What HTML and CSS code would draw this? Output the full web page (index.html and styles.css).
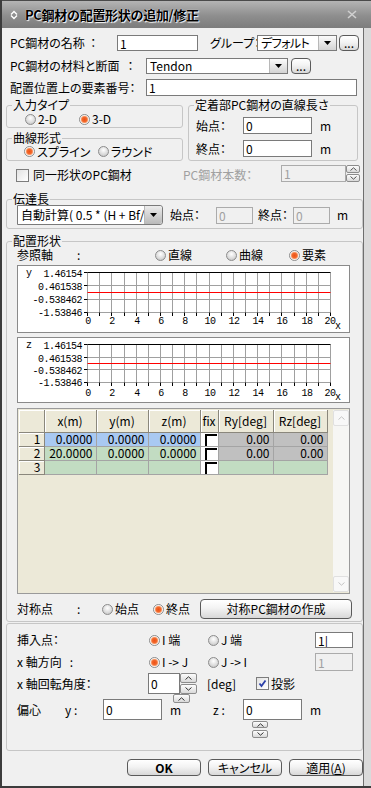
FILE: index.html
```html
<!doctype html>
<html lang="ja">

<head>
  <meta charset="utf-8">
  <title>PC鋼材の配置形状の追加/修正</title>
  <link rel="stylesheet" href="styles.css">
</head>

<body>
<div class="frame">
  <div class="titlebar">
    <svg class="title-icon" width="8" height="10" viewBox="0 0 8 10"><path d="M1 4.5L4 1.5L7 4.5M1 5.5L4 8.5L7 5.5" fill="none" stroke="#fff" stroke-width="1.4"/></svg>
    <span class="title-text">PC鋼材の配置形状の追加/修正</span>
    <svg class="title-close" width="10" height="9" viewBox="0 0 10 9"><path d="M1 1L9 8M9 1L1 8" stroke="#d0d0d0" stroke-width="1.6"/></svg>
  </div>

  <div class="dialog">
    <div class="row row-name">
      <span class="name-label">PC鋼材の名称 &nbsp;：</span>
      <input class="text name-input" value="1">
      <span class="group-label">グループ：</span>
      <div class="select group-select">
        <span class="select-text">デフォルト</span>
        <span class="drop"><svg width="7" height="4"><path d="M0 0H7L3.5 4Z"/></svg></span>
      </div>
      <button class="btn more">...</button>
    </div>

    <div class="row row-mat">
      <span class="mat-label">PC鋼材の材料と断面 &nbsp;&nbsp;：</span>
      <div class="select mat-select">
        <span class="select-text">Tendon</span>
        <span class="drop"><svg width="7" height="4"><path d="M0 0H7L3.5 4Z"/></svg></span>
      </div>
      <button class="btn more more-mat">...</button>
    </div>

    <div class="row row-elem">
      <span class="mat-label">配置位置上の要素番号：</span>
      <input class="text elem-input" value="1">
    </div>

    <div class="cols">
      <div class="left-col">
        <div class="box type-box">
          <span class="legend">入力タイプ</span>
          <div class="opts type-opts">
            <span class="opt type-opt1"><span class="radio"></span>2-D</span>
            <span class="opt"><span class="radio on"></span>3-D</span>
          </div>
        </div>
        <div class="box curve-box">
          <span class="legend">曲線形式</span>
          <div class="opts curve-opts">
            <span class="opt curve-opt1"><span class="radio on"></span>スプライン</span>
            <span class="opt"><span class="radio"></span>ラウンド</span>
          </div>
        </div>
      </div>
      <div class="box anchor-box">
        <span class="legend">定着部PC鋼材の直線長さ</span>
        <div class="len-row">
          <span class="len-label">始点：</span>
          <input class="text len-input" value="0">
          <span class="unit">m</span>
        </div>
        <div class="len-row len-row2">
          <span class="len-label">終点：</span>
          <input class="text len-input" value="0">
          <span class="unit">m</span>
        </div>
      </div>
    </div>

    <div class="row row-same">
      <span class="check"></span>
      <span class="same-label">同一形状のPC鋼材</span>
      <span class="count-label">PC鋼材本数：</span>
      <input class="text count-input" value="1" disabled>
      <span class="spin count-spin">
        <span class="spin-btn"><svg width="7" height="4"><path d="M0.5 3.5L3.5 0.8L6.5 3.5" fill="none" stroke="#555"/></svg></span>
        <span class="spin-btn"><svg width="7" height="4"><path d="M0.5 0.5L3.5 3.2L6.5 0.5" fill="none" stroke="#555"/></svg></span>
      </span>
    </div>

    <div class="box transfer-box">
      <span class="legend">伝達長</span>
      <div class="transfer-row">
        <div class="select transfer-select">
          <span class="select-text">自動計算( 0.5 * (H + Bf/2))</span>
          <span class="drop drop-round"><svg width="7" height="4"><path d="M0 0H7L3.5 4Z"/></svg></span>
        </div>
        <span class="tr-start">始点：</span>
        <input class="text tr-input" value="0" disabled>
        <span class="tr-end">終点：</span>
        <input class="text tr-input" value="0" disabled>
        <span class="unit tr-unit">m</span>
      </div>
    </div>

    <div class="box shape-box">
      <span class="legend">配置形状</span>
      <div class="ref-row">
        <span class="ref-label">参照軸</span>
        <span class="ref-colon">:</span>
        <span class="opt ref-opt1"><span class="radio"></span>直線</span>
        <span class="opt ref-opt2"><span class="radio"></span>曲線</span>
        <span class="opt"><span class="radio on"></span>要素</span>
      </div>

      <div class="chart">
        <svg width="331" height="66" viewBox="0 0 331 66">
          <path d="M69.5 19.5H312.5M69.5 33.5H312.5M69.5 46.5H312.5" stroke="#a0a0a0"/>
          <path d="M69.5 6.5V46.5M81.5 6.5V46.5M93.5 6.5V46.5M106.5 6.5V46.5M118.5 6.5V46.5M130.5 6.5V46.5M142.5 6.5V46.5M154.5 6.5V46.5M166.5 6.5V46.5M178.5 6.5V46.5M191.5 6.5V46.5M203.5 6.5V46.5M215.5 6.5V46.5M227.5 6.5V46.5M239.5 6.5V46.5M251.5 6.5V46.5M263.5 6.5V46.5M276.5 6.5V46.5M288.5 6.5V46.5M300.5 6.5V46.5M312.5 6.5V46.5" stroke="#a0a0a0"/>
          <path d="M66 6.5H69.5M66 19.5H69.5M66 33.5H69.5M66 46.5H69.5M69.5 46.5V50M81.5 46.5V50M93.5 46.5V50M106.5 46.5V50M118.5 46.5V50M130.5 46.5V50M142.5 46.5V50M154.5 46.5V50M166.5 46.5V50M178.5 46.5V50M191.5 46.5V50M203.5 46.5V50M215.5 46.5V50M227.5 46.5V50M239.5 46.5V50M251.5 46.5V50M263.5 46.5V50M276.5 46.5V50M288.5 46.5V50M300.5 46.5V50M312.5 46.5V50" stroke="#000"/>
          <path d="M69.5 6.5H312.5" stroke="#000" stroke-width="1.2"/>
          <rect x="69.5" y="26" width="243" height="1" fill="#f00"/>
          <g class="axis-text">
            <text x="8" y="10">y</text>
            <text x="64" y="11" text-anchor="end">1.46154</text>
            <text x="64" y="24" text-anchor="end">0.461538</text>
            <text x="64" y="37" text-anchor="end">-0.538462</text>
            <text x="64" y="50" text-anchor="end">-1.53846</text>
            <g text-anchor="middle">
              <text x="70" y="58">0</text><text x="94" y="58">2</text><text x="119" y="58">4</text><text x="143" y="58">6</text><text x="167" y="58">8</text><text x="192" y="58">10</text><text x="216" y="58">12</text><text x="240" y="58">14</text><text x="264" y="58">16</text><text x="289" y="58">18</text><text x="312" y="58">20</text>
            </g>
            <text x="317" y="63">x</text>
          </g>
        </svg>
      </div>

      <div class="chart chart-z">
        <svg width="331" height="64" viewBox="0 0 331 64">
          <path d="M69.5 19.5H312.5M69.5 31.5H312.5M69.5 44.5H312.5" stroke="#a0a0a0"/>
          <path d="M69.5 6.5V44.5M81.5 6.5V44.5M93.5 6.5V44.5M106.5 6.5V44.5M118.5 6.5V44.5M130.5 6.5V44.5M142.5 6.5V44.5M154.5 6.5V44.5M166.5 6.5V44.5M178.5 6.5V44.5M191.5 6.5V44.5M203.5 6.5V44.5M215.5 6.5V44.5M227.5 6.5V44.5M239.5 6.5V44.5M251.5 6.5V44.5M263.5 6.5V44.5M276.5 6.5V44.5M288.5 6.5V44.5M300.5 6.5V44.5M312.5 6.5V44.5" stroke="#a0a0a0"/>
          <path d="M66 6.5H69.5M66 19.5H69.5M66 31.5H69.5M66 44.5H69.5M69.5 44.5V48M81.5 44.5V48M93.5 44.5V48M106.5 44.5V48M118.5 44.5V48M130.5 44.5V48M142.5 44.5V48M154.5 44.5V48M166.5 44.5V48M178.5 44.5V48M191.5 44.5V48M203.5 44.5V48M215.5 44.5V48M227.5 44.5V48M239.5 44.5V48M251.5 44.5V48M263.5 44.5V48M276.5 44.5V48M288.5 44.5V48M300.5 44.5V48M312.5 44.5V48" stroke="#000"/>
          <path d="M69.5 6.5H312.5" stroke="#000" stroke-width="1.2"/>
          <rect x="69.5" y="25" width="243" height="1" fill="#f00"/>
          <g class="axis-text">
            <text x="8" y="10">z</text>
            <text x="64" y="11" text-anchor="end">1.46154</text>
            <text x="64" y="24" text-anchor="end">0.461538</text>
            <text x="64" y="36" text-anchor="end">-0.538462</text>
            <text x="64" y="48" text-anchor="end">-1.53846</text>
            <g text-anchor="middle">
              <text x="70" y="58">0</text><text x="94" y="58">2</text><text x="119" y="58">4</text><text x="143" y="58">6</text><text x="167" y="58">8</text><text x="192" y="58">10</text><text x="216" y="58">12</text><text x="240" y="58">14</text><text x="264" y="58">16</text><text x="289" y="58">18</text><text x="312" y="58">20</text>
            </g>
            <text x="317" y="62">x</text>
          </g>
        </svg>
      </div>

      <div class="grid-box">
        <div class="grid-area">
          <table class="grid">
            <colgroup>
              <col class="c-no"><col class="c-num"><col class="c-num"><col class="c-num"><col class="c-fix"><col class="c-ry"><col class="c-rz">
            </colgroup>
            <tr class="head">
              <th></th><th>x(m)</th><th>y(m)</th><th>z(m)</th><th>fix</th><th>Ry[deg]</th><th>Rz[deg]</th>
            </tr>
            <tr>
              <th class="no">1</th>
              <td class="sel">0.0000</td><td class="sel">0.0000</td><td class="sel">0.0000</td>
              <td class="fix"><span class="fixbox"></span></td>
              <td class="off">0.00</td><td class="off">0.00</td>
            </tr>
            <tr>
              <th class="no">2</th>
              <td>20.0000</td><td>0.0000</td><td>0.0000</td>
              <td class="fix"><span class="fixbox"></span></td>
              <td class="off">0.00</td><td class="off">0.00</td>
            </tr>
            <tr>
              <th class="no">3</th>
              <td></td><td></td><td></td>
              <td class="fix"><span class="fixbox"></span></td>
              <td></td><td></td>
            </tr>
          </table>
        </div>
        <div class="vscroll">
          <span class="scroll-btn"><svg width="7" height="4"><path d="M0.5 3.5L3.5 0.8L6.5 3.5" fill="none" stroke="#c4c4c4"/></svg></span>
          <span class="scroll-btn"><svg width="7" height="4"><path d="M0.5 0.5L3.5 3.2L6.5 0.5" fill="none" stroke="#c4c4c4"/></svg></span>
        </div>
      </div>

      <div class="sym-row">
        <span class="ref-label">対称点</span>
        <span class="sym-colon">:</span>
        <span class="opt sym-opt1"><span class="radio"></span>始点</span>
        <span class="opt sym-opt2"><span class="radio on"></span>終点</span>
        <button class="btn sym-btn">対称PC鋼材の作成</button>
      </div>
    </div>

    <div class="box place-box">
      <div class="p-row ins-row">
        <span class="p-label">挿入点：</span>
        <span class="opt p-opt1"><span class="radio on"></span>I 端</span>
        <span class="opt p-opt2"><span class="radio"></span>J 端</span>
        <input class="text p-input" value="1|">
      </div>
      <div class="p-row axis-row">
        <span class="p-label">x 軸方向 &nbsp;&nbsp;:</span>
        <span class="opt p-opt1"><span class="radio on"></span>I -&gt; J</span>
        <span class="opt p-opt2"><span class="radio"></span>J -&gt; I</span>
        <input class="text p-input" value="1" disabled>
      </div>
      <div class="p-row rot-row">
        <span class="rot-label">x 軸回転角度：</span>
        <input class="text rot-input" value="0">
        <span class="spin rot-spin">
          <span class="spin-btn"><svg width="7" height="4"><path d="M0.5 3.5L3.5 0.8L6.5 3.5" fill="none" stroke="#333"/></svg></span>
          <span class="spin-btn"><svg width="7" height="4"><path d="M0.5 0.5L3.5 3.2L6.5 0.5" fill="none" stroke="#333"/></svg></span>
        </span>
        <span class="deg">[deg]</span>
        <span class="check checked"><svg width="11" height="11" viewBox="0 0 11 11"><path d="M2.5 5.5L4.5 8L8.5 2.5" fill="none" stroke="#2b3fa8" stroke-width="1.8"/></svg></span>
        <span class="proj-label">投影</span>
      </div>
      <span class="spin-btn stray-btn"><svg width="7" height="4"><path d="M0.5 3.5L3.5 0.8L6.5 3.5" fill="none" stroke="#333"/></svg></span>
      <div class="p-row ecc-row">
        <span class="ecc-label">偏心</span>
        <span class="ecc-y">y :</span>
        <input class="text ecc-input" value="0">
        <span class="ecc-m">m</span>
        <span class="ecc-z">z :</span>
        <input class="text ecc-input" value="0">
        <span class="ecc-m2">m</span>
      </div>
      <span class="spin z-spin">
        <span class="spin-btn"><svg width="7" height="4"><path d="M0.5 3.5L3.5 0.8L6.5 3.5" fill="none" stroke="#333"/></svg></span>
        <span class="spin-btn"><svg width="7" height="4"><path d="M0.5 0.5L3.5 3.2L6.5 0.5" fill="none" stroke="#333"/></svg></span>
      </span>
    </div>

    <div class="actions">
      <button class="btn action ok">OK</button>
      <button class="btn action">キャンセル</button>
      <button class="btn action">適用(<u>A</u>)</button>
    </div>
  </div>
</div>
</body>

</html>
```

FILE: styles.css
```css
* { box-sizing:border-box; }
html, body { margin:0; padding:0; }
body { background:#d8d8d8; font-family:"Noto Sans CJK JP","Noto Sans",sans-serif; font-size:12px; line-height:14px; color:#000; font-feature-settings:"palt"; }
input, button { font:inherit; color:inherit; margin:0; font-feature-settings:"palt"; }
span { white-space:nowrap; }

.frame { width:371px; height:788px; display:flex; flex-direction:column; border-left:2px solid #3c3c3c; border-bottom:2px solid #3c3c3c; background:#dadada; overflow:hidden; }

/* title bar */
.titlebar { flex:none; height:28px; display:flex; align-items:center; padding-left:8px; border-top:1px solid #4a4a4a; background:linear-gradient(#b4b4b4, #8e8e8e 55%, #7c7c7c); }
.title-icon { margin-top:1px; }
.title-text { margin-left:7px; font-size:13px; font-weight:bold; font-feature-settings:normal; letter-spacing:-0.3px; text-shadow:0 0 1px #fff, 1px 1px 1px #fff; }
.title-close { margin-left:auto; margin-right:14px; }

.dialog { flex:1; width:362px; background:#f0f0f0; border-right:1px solid #6e6e6e; padding:7px 0 0 4px; }

/* controls */
.row { display:flex; align-items:center; padding-left:4px; }
.text { height:100%; border:1px solid #7a7a7a; background:#fff; padding:0 2px; outline:none; }
.text:disabled { background:#f0f0f0; border-color:#ababab; color:#a0a0a0; }
.select { display:flex; height:100%; border:1px solid #7a7a7a; background:#fff; }
.select-text { flex:1; min-width:0; padding-left:3px; overflow:hidden; line-height:14px; align-self:center; }
.drop { flex:none; width:18px; display:flex; align-items:center; justify-content:center; background:linear-gradient(#fbfbfb, #d3d3d3); border-left:1px solid #b8b8b8; }
.drop-round { border-radius:0 3px 3px 0; background:linear-gradient(#ececec, #b9b9b9); }
.btn { border:1px solid #5a5a5a; border-radius:4px; padding:0; background:linear-gradient(#fff, #f3f3f3 45%, #d8d8d8); }
.more { width:20px; height:16px; margin-left:2px; line-height:10px; }
.radio { flex:none; width:11px; height:11px; margin-right:2px; border-radius:50%; border:1px solid #8c8c8c; background:radial-gradient(circle at 50% 35%, #fff 0, #d6d6d6 65%, #b4b4b4 100%); }
.radio.on { background:radial-gradient(circle, #ee5016 0, #f26b2e 2.5px, #fbb48e 3.5px, #fff 4.2px, #d6d6d6 100%); }
.opt { display:flex; align-items:center; }
.check { flex:none; width:13px; height:13px; border:1px solid #7c7c7c; background:linear-gradient(135deg, #e2e2e2, #fff); display:flex; align-items:center; justify-content:center; }
.unit { margin-left:8px; }
.spin { display:flex; flex-direction:column; justify-content:space-between; }
.spin-btn { display:flex; align-items:center; justify-content:center; border:1px solid #8c8c8c; border-radius:2px; background:linear-gradient(#fdfdfd, #d9d9d9); }

/* group boxes */
.box { border:1px solid #c6c6c6; border-radius:3px; }
.legend { display:table; margin:-8px 0 -6px 5px; padding:0 1px; background:#f0f0f0; line-height:14px; }

.row-name { height:16px; }
.name-label { width:107px; }
.name-input { width:81px; }
.group-label { width:47px; margin-left:12px; }
.group-select { width:80px; }
.group-select .select-text { letter-spacing:-0.6px; }

.row-mat { height:16px; margin-top:7px; }
.mat-label { width:136px; }
.mat-select { width:142px; }
.more-mat { margin-left:3px; }
.row-elem { height:17px; margin-top:5px; }
.elem-input { width:211px; }

.cols { display:flex; gap:5px; margin-top:9px; }
.left-col { width:177px; }
.type-box, .curve-box { height:23px; }
.curve-box { margin-top:10px; }
.opts { display:flex; align-items:center; height:21px; }
.type-opts { padding:5px 0 0 18px; }
.type-opt1 { width:54px; }
.curve-opts { padding:4px 0 0 17px; }
.curve-opt1 { width:74px; }
.anchor-box { width:170px; height:56px; }
.len-row { display:flex; align-items:center; height:17px; margin-top:11px; padding-left:7px; }
.len-row2 { margin-top:6px; }
.len-label { width:47px; }
.len-input { width:69px; }

.row-same { height:17px; margin-top:4px; padding-left:10px; align-items:flex-end; }
.same-label { width:154px; padding-left:4px; }
.count-label { width:98px; color:#a0a0a0; }
.count-input { width:65px; }
.count-spin { width:14px; height:17px; }
.count-spin .spin-btn { height:8px; }

.transfer-box { height:30px; margin-top:17px; }
.transfer-row { display:flex; align-items:center; height:20px; margin-top:5px; padding-left:10px; }
.transfer-select { width:146px; border-radius:0 3px 3px 0; }
.tr-start { width:46px; margin-left:7px; }
.tr-input { width:37px; height:17px; }
.tr-end { width:35px; margin-left:5px; }
.tr-unit { margin-left:7px; }

.shape-box { height:381px; margin-top:12px; }
.ref-row, .sym-row { display:flex; align-items:center; padding-left:10px; }
.ref-row { height:14px; margin-top:6px; }
.ref-label { width:60px; }
.ref-colon { width:78px; }
.ref-opt1 { width:71px; }
.ref-opt2 { width:63px; }

.chart { width:333px; height:68px; margin:3px 0 0 10px; border:1px solid #8a8a8a; background:#fff; }
.chart svg { display:block; }
.chart-z { height:66px; margin-top:4px; }
.axis-text { font-family:"Liberation Mono","DejaVu Sans Mono",monospace; font-size:10px; letter-spacing:-0.5px; fill:#000; }

/* point table */
.grid-box { display:flex; width:333px; height:186px; margin:5px 0 0 10px; border:1px solid #9a9a9a; background:#ece9d8; }
.grid-area { padding:1px; }
.grid { border-collapse:collapse; table-layout:fixed; width:308px; }
.c-no { width:25px; }
.c-num { width:52px; }
.c-fix { width:18px; }
.c-ry { width:55px; }
.c-rz { width:54px; }
.grid th { font-weight:normal; background:#ece9d8; border-right:1px solid #8a877c; border-bottom:1px solid #8a877c; box-shadow:inset 1px 1px #fff; padding:0; }
.grid .head th { height:22px; text-align:center; }
.grid td, .grid .no { height:14px; line-height:12px; }
.grid .no { text-align:right; padding-right:3px; }
.grid td { border:1px solid #a4a4a4; background:#c2dcc2; text-align:right; padding:0 3px 0 0; white-space:nowrap; }
.grid td.sel { background:#a9c9f2; }
.grid td.off { background:#c0c0c0; }
.grid td.fix { background:#fff; padding:0; vertical-align:top; }
.fixbox { display:block; width:12px; height:12px; margin:1px 0 0 4px; border-left:2px solid #000; border-top:2px solid #000; }
.vscroll { width:16px; margin:1px 0 1px auto; display:flex; flex-direction:column; justify-content:space-between; background:#f6f6f4; }
.scroll-btn { height:16px; display:flex; align-items:center; justify-content:center; border:1px solid #e0e0e0; border-radius:2px; background:#f8f8f8; }

.sym-row { height:20px; margin-top:5px; }
.sym-colon { width:25px; }
.sym-opt1 { width:51px; }
.sym-opt2 { width:47px; }
.sym-btn { width:152px; height:20px; }

/* insertion / eccentricity */
.place-box { position:relative; height:128px; margin-top:1px; }
.p-row { display:flex; align-items:center; padding-left:10px; }
.ins-row { height:16px; margin-top:8px; }
.axis-row { height:18px; margin-top:5px; }
.p-label { width:132px; }
.p-opt1 { width:59px; }
.p-opt2 { width:107px; }
.p-input { width:38px; }
.rot-row { height:21px; margin-top:2px; }
.rot-label { width:131px; }
.rot-input { width:32px; }
.rot-spin { width:17px; height:21px; }
.rot-spin .spin-btn { height:10px; }
.deg { width:49px; margin-left:10px; }
.proj-label { margin-left:2px; }
.stray-btn { position:absolute; left:166px; top:70px; width:17px; height:9px; }
.ecc-row { height:21px; margin-top:5px; }
.ecc-label { width:48px; }
.ecc-y { width:38px; }
.ecc-input { width:59px; }
.ecc-m { width:43px; margin-left:8px; }
.ecc-z { width:30px; }
.ecc-m2 { margin-left:8px; }
.z-spin { width:16px; height:17px; margin:1px 0 0 245px; }
.z-spin .spin-btn { height:7px; }
.z-spin .spin-btn + .spin-btn { height:8px; }

.actions { display:flex; gap:7px; margin-top:8px; padding-left:121px; }
.action { width:74px; height:17px; line-height:14px; }
.ok { font-weight:bold; }
```
